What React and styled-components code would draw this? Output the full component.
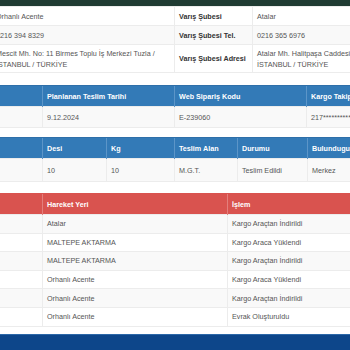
import React from "react";
import styled, { createGlobalStyle } from "styled-components";

const GlobalStyle = createGlobalStyle`
  html, body { margin: 0; padding: 0; overflow: hidden; background: #fff; }
  body {
    font-family: "Liberation Sans", Arial, Helvetica, sans-serif;
    font-size: 7.2px;
    color: #555;
  }
`;

const Viewport = styled.div`
  width: 350px;
  height: 350px;
  overflow: hidden;
  display: flex;
  flex-direction: column;
`;

const TopBar = styled.div`
  flex: none;
  height: 6px;
  background: #1f3b33;
`;

const Page = styled.div`
  flex: 1;
  width: 600px;
  margin-left: -91px;
  display: flex;
  flex-direction: column;
`;

const Table = styled.table`
  width: 600px;
  table-layout: fixed;
  border-collapse: collapse;
  margin-top: ${(p) => p.$gap || 0}px;
`;

const Col = styled.col`
  width: ${(p) => p.$w}px;
`;

const Th = styled.th`
  box-sizing: border-box;
  height: 21px;
  padding: 0 4px;
  text-align: left;
  font-weight: bold;
  color: #fff;
  white-space: nowrap;
  overflow: hidden;
  background: ${(p) => (p.$tone === "red" ? "#d9534f" : "#337ab7")};
  border-left: 1px solid ${(p) => (p.$tone === "red" ? "#e37f7c" : "#5c95c8")};
  border-top: 1px solid ${(p) => (p.$tone === "red" ? "#d9534f" : "#2e6fa9")};
`;

const Tr = styled.tr`
  background: ${(p) => (p.$alt ? "#f9f9f9" : "#fff")};
`;

const Td = styled.td`
  box-sizing: border-box;
  height: ${(p) => p.$h || 20}px;
  padding: 0 4px;
  border: 1px solid #ececec;
  white-space: nowrap;
  overflow: hidden;
  line-height: 11px;
`;

const Label = styled(Td)`
  font-weight: bold;
  color: #333;
`;

const Footer = styled.div`
  flex: none;
  height: 15px;
  background: #0d468a;
  border-top: 1px solid #2c68a8;
`;

const moves = [
  ["Atalar", "Kargo Araçtan İndirildi"],
  ["MALTEPE AKTARMA", "Kargo Araca Yüklendi"],
  ["MALTEPE AKTARMA", "Kargo Araçtan İndirildi"],
  ["Orhanlı Acente", "Kargo Araca Yüklendi"],
  ["Orhanlı Acente", "Kargo Araçtan İndirildi"],
  ["Orhanlı Acente", "Evrak Oluşturuldu"],
];

export default function App() {
  return (
    <Viewport>
      <GlobalStyle />
      <TopBar />
      <Page>
        <Table>
          <colgroup>
            <Col $w={82} />
            <Col $w={183} />
            <Col $w={78} />
            <Col $w={257} />
          </colgroup>
          <tbody>
            <Tr>
              <Label $h={19}>Çıkış Şubesi</Label>
              <Td $h={19}>Orhanlı Acente</Td>
              <Label $h={19}>Varış Şubesi</Label>
              <Td $h={19}>Atalar</Td>
            </Tr>
            <Tr $alt>
              <Label $h={19}>Çıkış Şubesi Tel.</Label>
              <Td $h={19}>0216 394 8329</Td>
              <Label $h={19}>Varış Şubesi Tel.</Label>
              <Td $h={19}>0216 365 6976</Td>
            </Tr>
            <Tr>
              <Label $h={28}>Adres</Label>
              <Td $h={28}>
                Mescit Mh. No: 11 Birmes Toplu İş Merkezi Tuzla /<br />
                İSTANBUL / TÜRKİYE
              </Td>
              <Label $h={28}>Varış Şubesi Adresi</Label>
              <Td $h={28}>
                Atalar Mh. Halitpaşa Caddesi No: 24 Kartal /<br />
                İSTANBUL / TÜRKİYE
              </Td>
            </Tr>
          </tbody>
        </Table>

        <Table $gap={12}>
          <colgroup>
            <Col $w={133} />
            <Col $w={132} />
            <Col $w={132} />
            <Col $w={132} />
            <Col $w={71} />
          </colgroup>
          <thead>
            <tr>
              <Th>Gönderi Tarihi</Th>
              <Th>Planlanan Teslim Tarihi</Th>
              <Th>Web Sipariş Kodu</Th>
              <Th>Kargo Takip No</Th>
              <Th />
            </tr>
          </thead>
          <tbody>
            <Tr $alt>
              <Td $h={21}>5.12.2024</Td>
              <Td $h={21}>9.12.2024</Td>
              <Td $h={21}>E-239060</Td>
              <Td $h={21}>217**********</Td>
              <Td $h={21} />
            </Tr>
          </tbody>
        </Table>

        <Table $gap={9}>
          <colgroup>
            <Col $w={133} />
            <Col $w={64} />
            <Col $w={68} />
            <Col $w={63} />
            <Col $w={70} />
            <Col $w={202} />
          </colgroup>
          <thead>
            <tr>
              <Th>Adet</Th>
              <Th>Desi</Th>
              <Th>Kg</Th>
              <Th>Teslim Alan</Th>
              <Th>Durumu</Th>
              <Th>Bulundugu Yer</Th>
            </tr>
          </thead>
          <tbody>
            <Tr $alt>
              <Td $h={23}>1</Td>
              <Td $h={23}>10</Td>
              <Td $h={23}>10</Td>
              <Td $h={23}>M.G.T.</Td>
              <Td $h={23}>Teslim Edildi</Td>
              <Td $h={23}>Merkez</Td>
            </Tr>
          </tbody>
        </Table>

        <Table $gap={11}>
          <colgroup>
            <Col $w={133} />
            <Col $w={185} />
            <Col $w={282} />
          </colgroup>
          <thead>
            <tr>
              <Th $tone="red">Tarih</Th>
              <Th $tone="red">Hareket Yeri</Th>
              <Th $tone="red">İşlem</Th>
            </tr>
          </thead>
          <tbody>
            {moves.map(([place, action], i) => (
              <Tr key={i} $alt={i % 2 === 0}>
                <Td $h={18.6}>09.12.2024</Td>
                <Td $h={18.6}>{place}</Td>
                <Td $h={18.6}>{action}</Td>
              </Tr>
            ))}
          </tbody>
        </Table>
      </Page>
      <Footer />
    </Viewport>
  );
}
